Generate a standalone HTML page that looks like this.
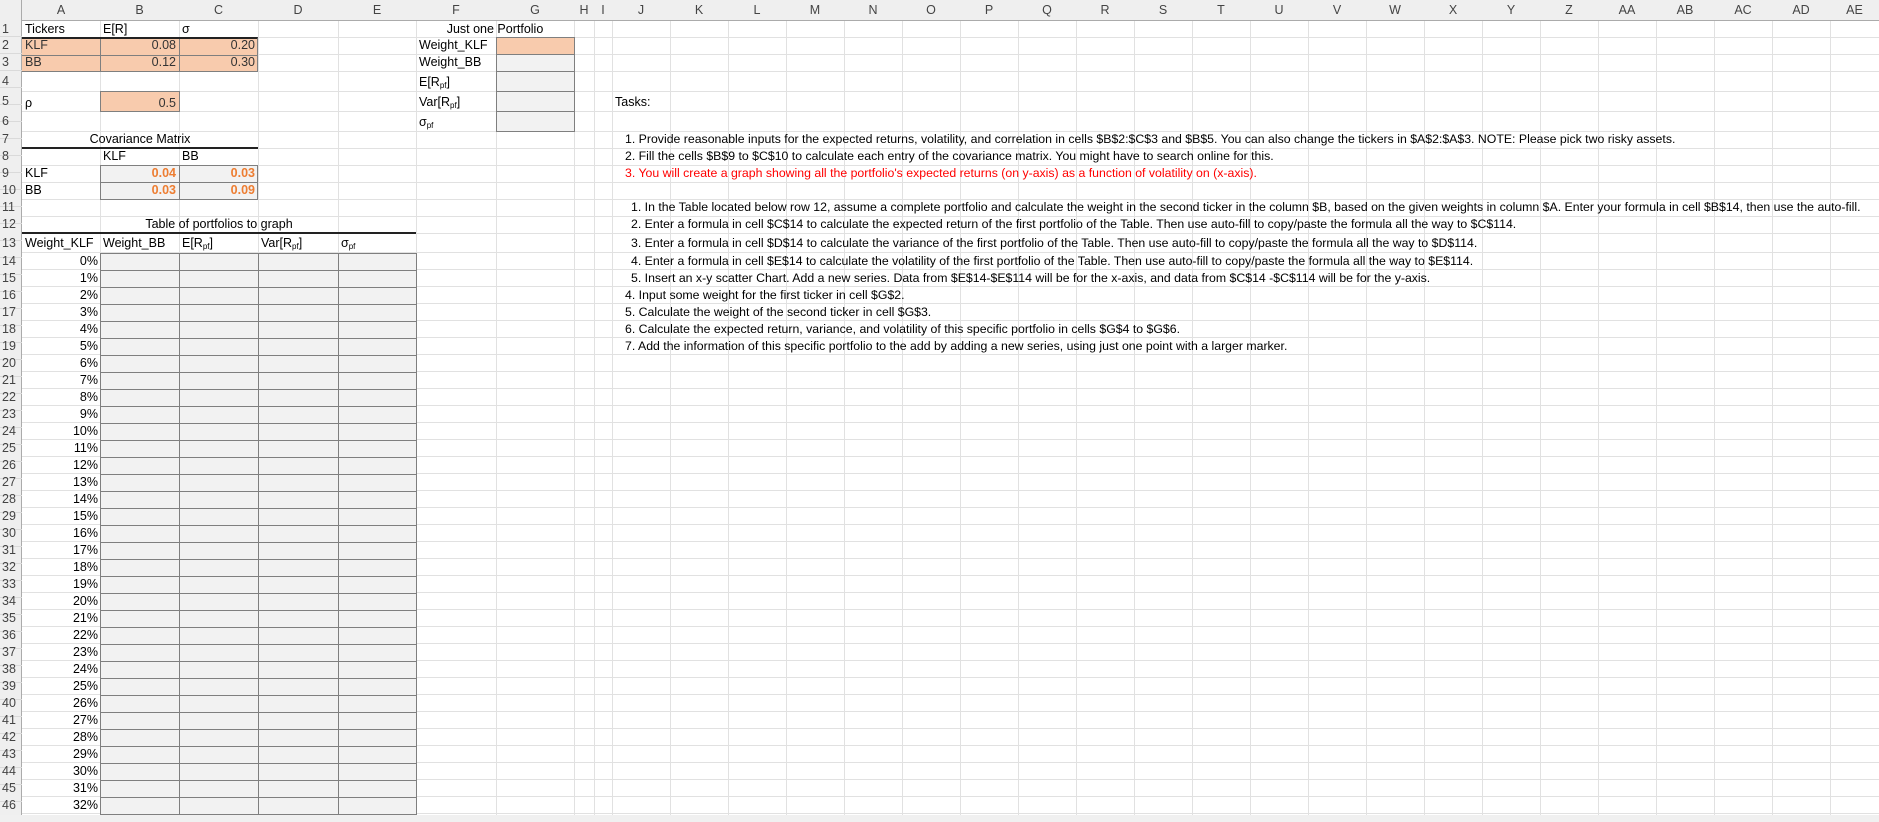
<!DOCTYPE html>
<html><head><meta charset="utf-8">
<style>
*{margin:0;padding:0;box-sizing:border-box}
body{width:1879px;height:822px;overflow:hidden;background:#fff;position:relative;font-family:"Liberation Sans",sans-serif;font-size:12.5px;color:#000}
.a{position:absolute}
.t{position:absolute;white-space:nowrap;font-size:12.5px}
.k{font-size:12.3px}
.vl{position:absolute;top:21px;width:1px;height:794px;background:#e1e1e1}
.hdr{position:absolute;top:0;height:21px;line-height:21px;text-align:center;color:#444;font-size:12.5px}
.rn{position:absolute;left:2px;width:20px;color:#444;font-size:12.5px}
sub{font-size:8px;vertical-align:-2px}
.or{background:#f8cbad}
.gr{background:#f2f2f2}
.box{position:absolute;border:1px solid #7f7f7f}
.r{text-align:right}
.ob{color:#ed7d31;font-weight:bold}
</style></head><body>
<div class="a" style="left:0;top:21px;width:1879px;height:232px;background:
linear-gradient(#e1e1e1,#e1e1e1) 0 16px/100% 1px no-repeat,
linear-gradient(#e1e1e1,#e1e1e1) 0 33px/100% 1px no-repeat,
linear-gradient(#e1e1e1,#e1e1e1) 0 50px/100% 1px no-repeat,
linear-gradient(#e1e1e1,#e1e1e1) 0 70px/100% 1px no-repeat,
linear-gradient(#e1e1e1,#e1e1e1) 0 90px/100% 1px no-repeat,
linear-gradient(#e1e1e1,#e1e1e1) 0 110px/100% 1px no-repeat,
linear-gradient(#e1e1e1,#e1e1e1) 0 127px/100% 1px no-repeat,
linear-gradient(#e1e1e1,#e1e1e1) 0 144px/100% 1px no-repeat,
linear-gradient(#e1e1e1,#e1e1e1) 0 161px/100% 1px no-repeat,
linear-gradient(#e1e1e1,#e1e1e1) 0 178px/100% 1px no-repeat,
linear-gradient(#e1e1e1,#e1e1e1) 0 195px/100% 1px no-repeat,
linear-gradient(#e1e1e1,#e1e1e1) 0 212px/100% 1px no-repeat,
linear-gradient(#e1e1e1,#e1e1e1) 0 231px/100% 1px no-repeat"></div>
<div class="a" style="left:0;top:253px;width:1879px;height:562px;background:repeating-linear-gradient(to bottom,transparent 0,transparent 16px,#e1e1e1 16px,#e1e1e1 17px)"></div>
<div class="vl" style="left:100px"></div><div class="vl" style="left:179px"></div><div class="vl" style="left:258px"></div><div class="vl" style="left:338px"></div><div class="vl" style="left:416px"></div><div class="vl" style="left:496px"></div><div class="vl" style="left:574px"></div><div class="vl" style="left:594px"></div>
<div class="a" style="left:612px;top:21px;width:1267px;height:794px;background:repeating-linear-gradient(to right,#e1e1e1 0,#e1e1e1 1px,transparent 1px,transparent 58px)"></div>
<div class="a" style="left:0;top:0;width:1879px;height:21px;background:#efefef;border-bottom:1px solid #ababab"></div>
<div class="a" style="left:0;top:0;width:22px;height:815px;background:#efefef;border-right:1px solid #ababab"></div>
<div class="a" style="left:0;top:815px;width:1879px;height:7px;background:#f0f0f0"></div>
<div class="a" style="left:0;top:21px;width:22px;height:794px;background:repeating-linear-gradient(to bottom,transparent 0,transparent 16px,#dadada 16px,#dadada 17px);background-position:0 -1px"></div>
<div class="hdr" style="left:22px;width:78px">A</div><div class="hdr" style="left:100px;width:79px">B</div><div class="hdr" style="left:179px;width:79px">C</div><div class="hdr" style="left:258px;width:80px">D</div><div class="hdr" style="left:338px;width:78px">E</div><div class="hdr" style="left:416px;width:80px">F</div><div class="hdr" style="left:496px;width:78px">G</div><div class="hdr" style="left:574px;width:20px">H</div><div class="hdr" style="left:594px;width:18px">I</div>
<div class="hdr" style="left:612px;width:58px">J</div><div class="hdr" style="left:670px;width:58px">K</div><div class="hdr" style="left:728px;width:58px">L</div><div class="hdr" style="left:786px;width:58px">M</div><div class="hdr" style="left:844px;width:58px">N</div><div class="hdr" style="left:902px;width:58px">O</div><div class="hdr" style="left:960px;width:58px">P</div><div class="hdr" style="left:1018px;width:58px">Q</div><div class="hdr" style="left:1076px;width:58px">R</div><div class="hdr" style="left:1134px;width:58px">S</div><div class="hdr" style="left:1192px;width:58px">T</div><div class="hdr" style="left:1250px;width:58px">U</div><div class="hdr" style="left:1308px;width:58px">V</div><div class="hdr" style="left:1366px;width:58px">W</div><div class="hdr" style="left:1424px;width:58px">X</div><div class="hdr" style="left:1482px;width:58px">Y</div><div class="hdr" style="left:1540px;width:58px">Z</div><div class="hdr" style="left:1598px;width:58px">AA</div><div class="hdr" style="left:1656px;width:58px">AB</div><div class="hdr" style="left:1714px;width:58px">AC</div><div class="hdr" style="left:1772px;width:58px">AD</div><div class="hdr" style="left:1830px;width:49px">AE</div>
<div class="rn" style="top:21px;line-height:17px">1</div><div class="rn" style="top:37px;line-height:17px">2</div><div class="rn" style="top:54px;line-height:17px">3</div><div class="rn" style="top:71px;line-height:20px">4</div><div class="rn" style="top:91px;line-height:20px">5</div><div class="rn" style="top:111px;line-height:20px">6</div><div class="rn" style="top:131px;line-height:17px">7</div><div class="rn" style="top:148px;line-height:17px">8</div><div class="rn" style="top:165px;line-height:17px">9</div><div class="rn" style="top:182px;line-height:17px">10</div><div class="rn" style="top:199px;line-height:17px">11</div><div class="rn" style="top:216px;line-height:17px">12</div><div class="rn" style="top:233px;line-height:20px">13</div>
<div class="rn" style="top:253px;line-height:17px">14<br>15<br>16<br>17<br>18<br>19<br>20<br>21<br>22<br>23<br>24<br>25<br>26<br>27<br>28<br>29<br>30<br>31<br>32<br>33<br>34<br>35<br>36<br>37<br>38<br>39<br>40<br>41<br>42<br>43<br>44<br>45<br>46</div>
<div class="a or" style="left:22px;top:37px;width:236px;height:35px"></div>
<div class="a" style="left:22px;top:37px;width:236px;height:35px;border-top:2px solid #222;border-bottom:1px solid #7f7f7f;background:linear-gradient(#7f7f7f,#7f7f7f) 0 16px/100% 1px no-repeat,linear-gradient(#7f7f7f,#7f7f7f) 78px 0/1px 100% no-repeat,linear-gradient(#7f7f7f,#7f7f7f) 157px 0/1px 100% no-repeat;border-right:1px solid #7f7f7f"></div>
<div class="box or" style="left:100px;top:91px;width:80px;height:21px"></div>
<div class="box or" style="left:496px;top:37px;width:79px;height:18px"></div>
<div class="box gr" style="left:496px;top:54px;width:79px;height:18px"></div>
<div class="box gr" style="left:496px;top:71px;width:79px;height:21px"></div>
<div class="box gr" style="left:496px;top:91px;width:79px;height:21px"></div>
<div class="box gr" style="left:496px;top:111px;width:79px;height:21px"></div>
<div class="a" style="left:22px;top:147px;width:236px;height:2px;background:#222"></div>
<div class="a" style="left:22px;top:232px;width:394px;height:2px;background:#222"></div>
<div class="a gr" style="left:100px;top:165px;width:158px;height:35px;border:1px solid #7f7f7f;background:linear-gradient(#7f7f7f,#7f7f7f) 0 16px/100% 1px no-repeat,linear-gradient(#7f7f7f,#7f7f7f) 78px 0/1px 100% no-repeat,#f2f2f2"></div>
<div class="a" style="left:100px;top:253px;width:317px;height:562px;border-left:1px solid #7f7f7f;border-right:1px solid #7f7f7f;background:repeating-linear-gradient(to bottom,#7f7f7f 0,#7f7f7f 1px,transparent 1px,transparent 17px),linear-gradient(#7f7f7f,#7f7f7f) 78px 0/1px 100% no-repeat,linear-gradient(#7f7f7f,#7f7f7f) 157px 0/1px 100% no-repeat,linear-gradient(#7f7f7f,#7f7f7f) 237px 0/1px 100% no-repeat,#f2f2f2"></div>
<div class="t" style="left:25px;top:21px;line-height:17px">Tickers</div>
<div class="t" style="left:103px;top:21px;line-height:17px">E[R]</div>
<div class="t" style="left:182px;top:21px;line-height:17px">σ</div>
<div class="t" style="left:25px;top:37px;line-height:17px;color:#333">KLF</div>
<div class="t r" style="left:100px;width:76px;top:37px;line-height:17px;color:#333">0.08</div>
<div class="t r" style="left:179px;width:76px;top:37px;line-height:17px;color:#333">0.20</div>
<div class="t" style="left:25px;top:54px;line-height:17px;color:#333">BB</div>
<div class="t r" style="left:100px;width:76px;top:54px;line-height:17px;color:#333">0.12</div>
<div class="t r" style="left:179px;width:76px;top:54px;line-height:17px;color:#333">0.30</div>
<div class="t" style="left:25px;top:93px;line-height:20px">ρ</div>
<div class="t r" style="left:100px;width:76px;top:93px;line-height:20px;color:#333">0.5</div>
<div class="t" style="left:22px;width:236px;text-align:center;top:131px;line-height:17px">Covariance Matrix</div>
<div class="t" style="left:103px;top:148px;line-height:17px">KLF</div>
<div class="t" style="left:182px;top:148px;line-height:17px">BB</div>
<div class="t" style="left:25px;top:165px;line-height:17px">KLF</div>
<div class="t" style="left:25px;top:182px;line-height:17px">BB</div>
<div class="t r ob" style="left:100px;width:76px;top:165px;line-height:17px">0.04</div>
<div class="t r ob" style="left:179px;width:76px;top:165px;line-height:17px">0.03</div>
<div class="t r ob" style="left:100px;width:76px;top:182px;line-height:17px">0.03</div>
<div class="t r ob" style="left:179px;width:76px;top:182px;line-height:17px">0.09</div>
<div class="t" style="left:22px;width:394px;text-align:center;top:216px;line-height:17px">Table of portfolios to graph</div>
<div class="t" style="left:25px;top:235px;line-height:17px">Weight_KLF</div>
<div class="t" style="left:103px;top:235px;line-height:17px">Weight_BB</div>
<div class="t" style="left:182px;top:235px;line-height:17px">E[R<sub>pf</sub>]</div>
<div class="t" style="left:261px;top:235px;line-height:17px">Var[R<sub>pf</sub>]</div>
<div class="t" style="left:341px;top:235px;line-height:17px">σ<sub>pf</sub></div>
<div class="t r" style="left:22px;width:76px;top:253px;line-height:17px">0%<br>1%<br>2%<br>3%<br>4%<br>5%<br>6%<br>7%<br>8%<br>9%<br>10%<br>11%<br>12%<br>13%<br>14%<br>15%<br>16%<br>17%<br>18%<br>19%<br>20%<br>21%<br>22%<br>23%<br>24%<br>25%<br>26%<br>27%<br>28%<br>29%<br>30%<br>31%<br>32%</div>
<div class="t" style="left:416px;width:158px;text-align:center;top:21px;line-height:17px">Just one Portfolio</div>
<div class="t" style="left:419px;top:37px;line-height:17px">Weight_KLF</div>
<div class="t" style="left:419px;top:54px;line-height:17px">Weight_BB</div>
<div class="t" style="left:419px;top:72px;line-height:20px">E[R<sub>pf</sub>]</div>
<div class="t" style="left:419px;top:92px;line-height:20px">Var[R<sub>pf</sub>]</div>
<div class="t" style="left:419px;top:112px;line-height:20px">σ<sub>pf</sub></div>
<div class="t" style="left:615px;top:92px;line-height:20px">Tasks:</div>
<div class="t k" style="left:625px;top:131px;line-height:17px">1. Provide reasonable inputs for the expected returns, volatility, and correlation in cells $B$2:$C$3 and $B$5. You can also change the tickers in $A$2:$A$3. NOTE: Please pick two risky assets.</div>
<div class="t k" style="left:625px;top:148px;line-height:17px">2. Fill the cells $B$9 to $C$10 to calculate each entry of the covariance matrix. You might have to search online for this.</div>
<div class="t k" style="left:625px;top:165px;line-height:17px;color:#ff0000">3. You will create a graph showing all the portfolio's expected returns (on y-axis) as a function of volatility on (x-axis).</div>
<div class="t k" style="left:631px;top:199px;line-height:17px">1. In the Table located below row 12, assume a complete portfolio and calculate the weight in the second ticker in the column $B, based on the given weights in column $A. Enter your formula in cell $B$14, then use the auto-fill.</div>
<div class="t k" style="left:631px;top:216px;line-height:17px">2. Enter a formula in cell $C$14 to calculate the expected return of the first portfolio of the Table. Then use auto-fill to copy/paste the formula all the way to $C$114.</div>
<div class="t k" style="left:631px;top:235px;line-height:17px">3. Enter a formula in cell $D$14 to calculate the variance of the first portfolio of the Table. Then use auto-fill to copy/paste the formula all the way to $D$114.</div>
<div class="t k" style="left:631px;top:253px;line-height:17px">4. Enter a formula in cell $E$14 to calculate the volatility of the first portfolio of the Table. Then use auto-fill to copy/paste the formula all the way to $E$114.</div>
<div class="t k" style="left:631px;top:270px;line-height:17px">5. Insert an x-y scatter Chart. Add a new series. Data from $E$14-$E$114 will be for the x-axis, and data from $C$14 -$C$114 will be for the y-axis.</div>
<div class="t k" style="left:625px;top:287px;line-height:17px">4. Input some weight for the first ticker in cell $G$2.</div>
<div class="t k" style="left:625px;top:304px;line-height:17px">5. Calculate the weight of the second ticker in cell $G$3.</div>
<div class="t k" style="left:625px;top:321px;line-height:17px">6. Calculate the expected return, variance, and volatility of this specific portfolio in cells $G$4 to $G$6.</div>
<div class="t k" style="left:625px;top:338px;line-height:17px">7. Add the information of this specific portfolio to the add by adding a new series, using just one point with a larger marker.</div>
</body></html>
